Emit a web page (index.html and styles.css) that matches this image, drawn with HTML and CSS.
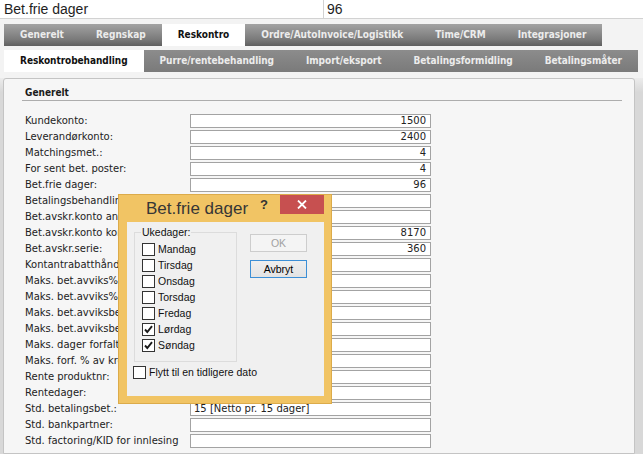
FILE: index.html
```html
<!DOCTYPE html>
<html lang="no">
<head>
<meta charset="utf-8">
<title>Reskontro</title>
<link rel="stylesheet" href="styles.css">
</head>
<body>
<div class="topbar">
  <div class="cell name">Bet.frie dager</div>
  <div class="cell val">96</div>
</div>

<div class="tabs main">
  <div class="tab">Generelt</div>
  <div class="tab">Regnskap</div>
  <div class="tab active">Reskontro</div>
  <div class="tab">Ordre/AutoInvoice/Logistikk</div>
  <div class="tab">Time/CRM</div>
  <div class="tab">Integrasjoner</div>
</div>

<div class="tabs sub">
  <div class="tab active">Reskontrobehandling</div>
  <div class="tab">Purre/rentebehandling</div>
  <div class="tab">Import/eksport</div>
  <div class="tab">Betalingsformidling</div>
  <div class="tab">Betalingsmåter</div>
</div>

<div class="frame">
  <div class="panel">
    <div class="heading">Generelt</div>
    <div class="form">
      <div class="row"><div class="label">Kundekonto:</div><div class="field">1500</div></div>
      <div class="row"><div class="label">Leverandørkonto:</div><div class="field">2400</div></div>
      <div class="row"><div class="label">Matchingsmet.:</div><div class="field">4</div></div>
      <div class="row"><div class="label">For sent bet. poster:</div><div class="field">4</div></div>
      <div class="row"><div class="label">Bet.frie dager:</div><div class="field">96</div></div>
      <div class="row"><div class="label">Betalingsbehandling:</div><div class="field"></div></div>
      <div class="row"><div class="label">Bet.avskr.konto annet:</div><div class="field"></div></div>
      <div class="row"><div class="label">Bet.avskr.konto kontant:</div><div class="field">8170</div></div>
      <div class="row"><div class="label">Bet.avskr.serie:</div><div class="field">360</div></div>
      <div class="row"><div class="label">Kontantrabatthåndtering:</div><div class="field"></div></div>
      <div class="row"><div class="label">Maks. bet.avviks% +:</div><div class="field"></div></div>
      <div class="row"><div class="label">Maks. bet.avviks% -:</div><div class="field"></div></div>
      <div class="row"><div class="label">Maks. bet.avviksbeløp +:</div><div class="field"></div></div>
      <div class="row"><div class="label">Maks. bet.avviksbeløp -:</div><div class="field"></div></div>
      <div class="row"><div class="label">Maks. dager forfalt:</div><div class="field"></div></div>
      <div class="row"><div class="label">Maks. forf. % av kreditt:</div><div class="field"></div></div>
      <div class="row"><div class="label">Rente produktnr:</div><div class="field"></div></div>
      <div class="row"><div class="label">Rentedager:</div><div class="field"></div></div>
      <div class="row"><div class="label">Std. betalingsbet.:</div><div class="field text">15 [Netto pr. 15 dager]</div></div>
      <div class="row"><div class="label">Std. bankpartner:</div><div class="field"></div></div>
      <div class="row"><div class="label">Std. factoring/KID for innlesing</div><div class="field"></div></div>
    </div>
  </div>
</div>

<div class="dialog">
  <div class="titlebar">
    <div class="title">Bet.frie dager</div>
    <div class="help">?</div>
    <div class="close">
      <svg width="10" height="9" viewBox="0 0 10 9"><path d="M1 0.5 L9 8.5 M9 0.5 L1 8.5" stroke="#fff" stroke-width="1.8" fill="none"/></svg>
    </div>
  </div>
  <div class="client">
    <div class="top-area">
      <fieldset class="days">
        <legend>Ukedager:</legend>
        <div class="cb"><span class="box"></span>Mandag</div>
        <div class="cb"><span class="box"></span>Tirsdag</div>
        <div class="cb"><span class="box"></span>Onsdag</div>
        <div class="cb"><span class="box"></span>Torsdag</div>
        <div class="cb"><span class="box"></span>Fredag</div>
        <div class="cb"><span class="box"><svg width="11" height="11" viewBox="0 0 11 11"><path d="M2 5.5 L4.3 8 L9 2.2" stroke="#1a1a1a" stroke-width="1.9" fill="none"/></svg></span>Lørdag</div>
        <div class="cb"><span class="box"><svg width="11" height="11" viewBox="0 0 11 11"><path d="M2 5.5 L4.3 8 L9 2.2" stroke="#1a1a1a" stroke-width="1.9" fill="none"/></svg></span>Søndag</div>
      </fieldset>
      <div class="buttons">
        <div class="btn disabled">OK</div>
        <div class="btn focus">Avbryt</div>
      </div>
    </div>
    <div class="cb move"><span class="box"></span>Flytt til en tidligere dato</div>
  </div>
</div>
</body>
</html>
```
FILE: styles.css
```css
body {
  margin: 0;
  background: #f3f3f3;
  font-family: "DejaVu Sans", sans-serif;
  font-size: 10px;
  color: #222;
}

.topbar {
  display: flex;
  height: 18px;
  background: #fff;
  border-bottom: 1px solid #d2d2d2;
  font-family: "Liberation Sans", Arial, sans-serif;
  font-size: 14px;
  line-height: 18px;
  color: #1e1e1e;
}
.topbar .name {
  width: 319px;
  padding-left: 4px;
  border-right: 1px solid #d2d2d2;
}
.topbar .val {
  padding-left: 3px;
}

.tabs {
  display: flex;
  width: max-content;
  margin-left: 4px;
  height: 22px;
}
.tabs.main {
  margin-top: 5px;
  background: linear-gradient(#a3a3a3, #7a7a7a 70%, #5f5f5f);
}
.tabs.sub {
  margin-top: 4px;
  background: linear-gradient(#8c8c8c, #7a7a7a);
}
.tab {
  padding: 0 16px;
  line-height: 22px;
  font-family: "DejaVu Sans Condensed", "DejaVu Sans", sans-serif;
  font-stretch: condensed;
  font-weight: bold;
  font-size: 10px;
  color: #ececec;
  white-space: nowrap;
}
.tabs.sub .tab {
  letter-spacing: -0.05px;
}
.tab.active {
  background: #fff;
  color: #111;
}

.frame {
  margin-top: 6px;
  display: flex;
  height: 376px;
  padding: 0 8px 0 3px;
  background: linear-gradient(#ececec, #d8d8d8 14px);
  overflow: hidden;
}
.panel {
  flex: 1;
  background: #f6f6f6;
  border: 1px solid #c4c4c4;
  border-radius: 3px 3px 0 0;
}
.heading {
  margin: 7px 12px 0 18px;
  padding-left: 3px;
  line-height: 14px;
  border-bottom: 1px solid #adadad;
  font-family: "DejaVu Sans Condensed", "DejaVu Sans", sans-serif;
  font-stretch: condensed;
  font-weight: bold;
  color: #1a1a1a;
}
.form {
  margin-top: 12px;
  padding-left: 21px;
}
.row {
  display: flex;
  align-items: center;
  height: 16px;
}
.label {
  width: 165px;
  line-height: 16px;
  white-space: nowrap;
  overflow: hidden;
  color: #222;
}
.field {
  width: 241px;
  height: 14px;
  box-sizing: border-box;
  border: 1px solid #a3a3a3;
  background: #fff;
  line-height: 12px;
  padding: 0 4px;
  text-align: right;
  white-space: nowrap;
}
.field.text {
  text-align: left;
  padding-left: 3px;
}

.dialog {
  position: absolute;
  left: 118px;
  top: 194px;
  width: 214px;
  height: 210px;
  box-sizing: border-box;
  background: #f1c464;
  border: 1px solid #dcab4a;
  font-family: "Liberation Sans", Arial, sans-serif;
  font-size: 10.5px;
  color: #111;
}
.titlebar {
  display: flex;
  height: 27px;
}
.title {
  padding-left: 27px;
  font-size: 17px;
  line-height: 27px;
  color: #363636;
}
.help {
  margin-left: auto;
  margin-right: 12px;
  font-size: 13px;
  font-weight: bold;
  line-height: 19px;
  color: #333;
}
.close {
  width: 44px;
  height: 19px;
  margin-right: 7px;
  background: #c75050;
  display: flex;
  align-items: center;
  justify-content: center;
}
.client {
  margin: 0 7px 0 8px;
  height: 174px;
  box-sizing: border-box;
  padding: 3px 0 0 7px;
  background: #f0f0f0;
}
.top-area {
  display: flex;
}
.days {
  width: 103px;
  box-sizing: border-box;
  margin: 0;
  padding: 2px 0 8px 7px;
  border: 1px solid #dcdcdc;
}
.days legend {
  padding: 0 1px;
  margin-left: -1px;
  line-height: 14px;
}
.cb {
  display: flex;
  align-items: center;
  height: 16px;
  white-space: nowrap;
}
.box {
  width: 13px;
  height: 13px;
  box-sizing: border-box;
  border: 1px solid #333;
  background: #fff;
  margin-right: 3px;
  display: flex;
  align-items: center;
  justify-content: center;
}
.cb.move {
  margin: 2px 0 0 -1px;
}
.buttons {
  margin-left: 13px;
  padding-top: 9px;
}
.btn {
  width: 57px;
  height: 18px;
  box-sizing: border-box;
  line-height: 16px;
  text-align: center;
  border: 1px solid #acacac;
  background: linear-gradient(#efefef, #e3e3e3);
}
.btn.disabled {
  border-color: #cdcdcd;
  background: #f4f4f4;
  color: #a2a2a2;
}
.btn.focus {
  margin-top: 8px;
  border-color: #3c8fd6;
  color: #000;
}
```
